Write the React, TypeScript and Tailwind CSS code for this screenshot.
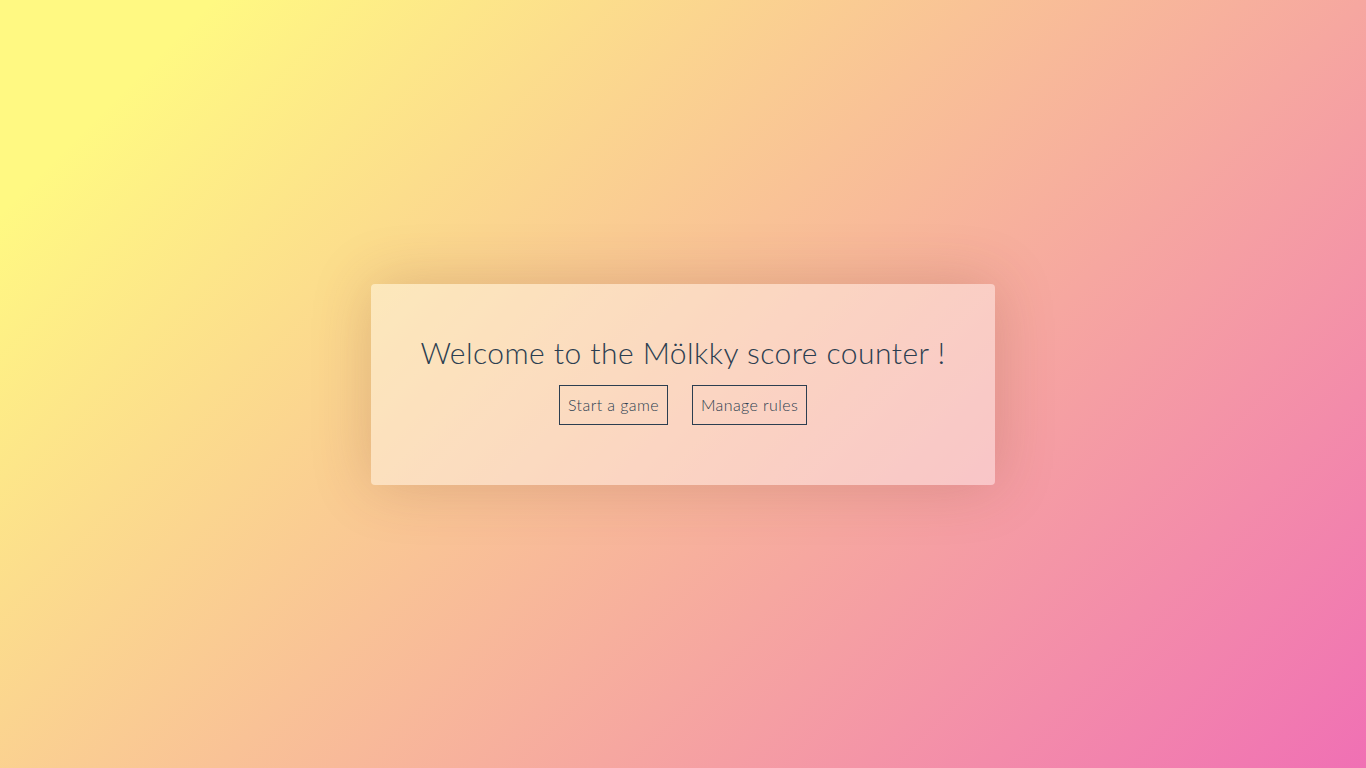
const App = () => {
  return (
    <div className="min-h-screen w-full flex items-center justify-center bg-[linear-gradient(135deg,#fff982_10%,#f070b4_100%)] font-['Lato',sans-serif] text-[#2c3e50]">
      {/* Welcome card */}
      <div className="w-[624px] h-[201px] rounded bg-white/40 shadow-[0_0_60px_rgba(120,60,40,0.22)] flex flex-col items-center pt-[50px]">
        <h1 className="text-[30px] leading-[36px] font-light tracking-[0.45px]">
          Welcome to the Mölkky score counter !
        </h1>
        <div className="mt-[15px] flex gap-6">
          <button className="w-[109px] h-10 border border-[#2c3e50] text-base font-light tracking-[0.4px] text-[#2c3e50]">
            Start a game
          </button>
          <button className="w-[115px] h-10 border border-[#2c3e50] text-base font-light tracking-[0.4px] text-[#2c3e50]">
            Manage rules
          </button>
        </div>
      </div>
    </div>
  );
};

export default App;
